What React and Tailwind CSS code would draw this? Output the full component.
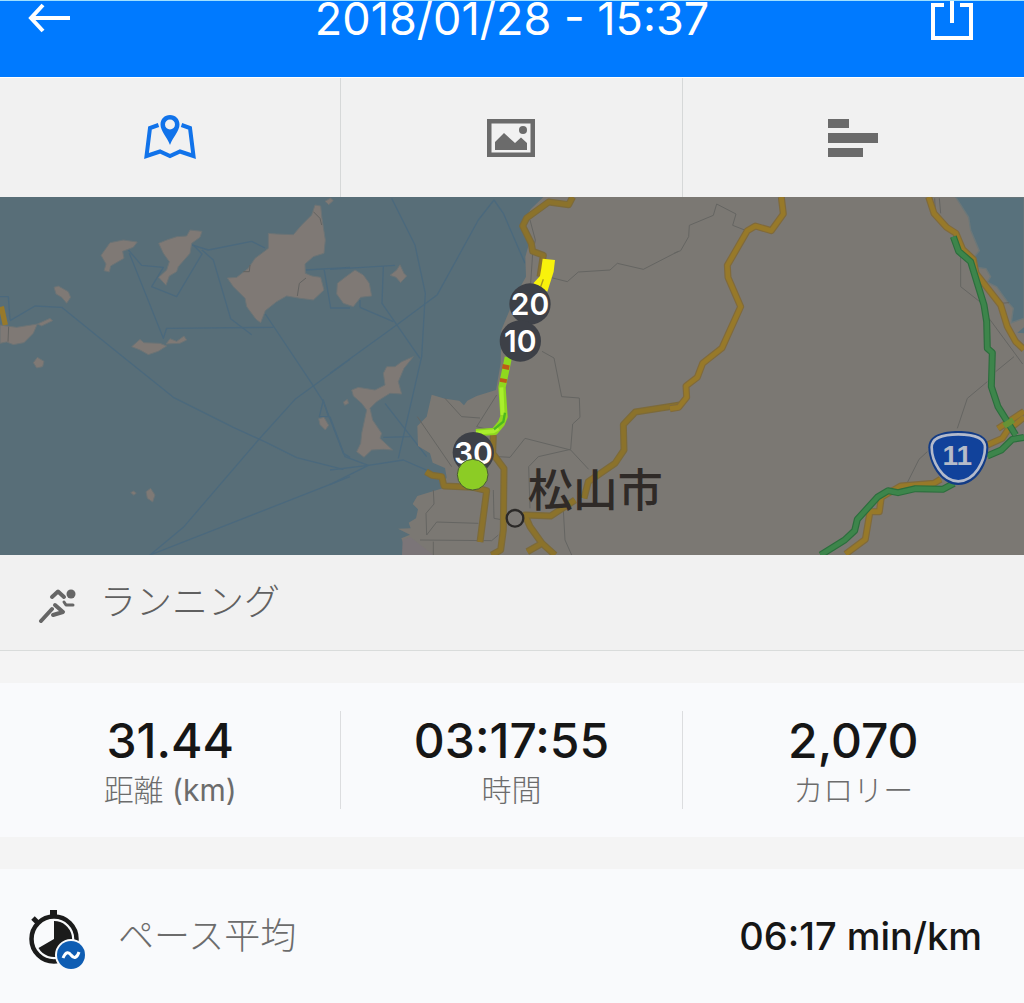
import React, { useState } from 'react'

const TABS = [
  { id: 'map', label: '地図', Icon: MapTabIcon },
  { id: 'photos', label: '写真', Icon: PhotoTabIcon },
  { id: 'splits', label: 'ラップ', Icon: SplitsTabIcon },
]

const STATS = [
  { label: '距離', unit: ' (km)', value: '31.44' },
  { label: '時間', value: '03:17:55' },
  { label: 'カロリー', value: '2,070' },
]

// Land, ferry lines and roads, split into three sheets that sit side by side
const WEST_ISLANDS = [
  'M303 196 L318 175 L330 158 L370 150 L412 156 L400 172 L368 184 L372 205 L332 228 L328 246 L312 242 L318 222 Z',
  'M476 160 L500 150 L530 140 L560 138 L570 120 L606 124 L600 142 L575 160 L570 190 L535 230 L530 245 L508 258 L498 286 L476 262 L500 240 L508 215 L490 190 Z',
  'M805 130 L830 132 L880 134 L905 105 L935 75 L945 45 L962 48 L966 85 L976 150 L972 190 L940 200 L915 222 L916 250 L936 258 L962 262 L972 300 L940 330 L900 325 L860 318 L830 335 L796 362 L782 398 L768 388 L740 350 L735 325 L700 290 L682 264 L710 262 L745 235 L765 205 L805 175 Z',
  'M162 292 L175 288 L205 305 L212 322 L200 340 L185 322 L168 312 Z',
  'M0 405 L50 412 L112 402 L100 430 L72 458 L40 464 L20 456 L0 460 Z',
  'M112 402 L150 385 L158 392 L125 408 Z',
  'M395 470 L420 448 L432 458 L480 460 L500 468 L475 484 L445 494 L420 480 Z',
  'M498 462 L510 446 L530 454 L552 438 L560 450 L540 460 Z',
  'M100 518 L112 502 L132 514 L128 530 L110 534 Z',
  'M956 686 L972 682 L986 706 L976 720 L960 704 Z',
  'M438 905 L452 895 L465 915 L458 936 L442 925 Z',
  'M392 908 L400 903 L409 909 L402 916 Z',
  'M975 34 L992 24 L1000 32 L986 44 Z',
  'M1030 636 L1042 628 L1046 640 L1034 646 Z',
]

const CENTER_ISLANDS = [
  'M22 280 L45 262 L75 240 L100 255 L118 280 L125 318 L92 322 L70 350 L40 340 L20 312 Z',
  'M180 256 L200 240 L210 224 L222 250 L230 258 L212 278 L198 262 Z',
  'M250 500 L215 515 L195 530 L170 530 L160 550 L165 585 L135 600 L85 592 L65 600 L70 618 L95 640 L110 660 L95 730 L92 760 L80 785 L102 802 L125 780 L160 778 L188 780 L150 745 L155 730 L128 690 L120 655 L140 635 L180 610 L215 612 L205 575 L222 535 Z',
]

const WEST_FERRIES = [
  'M0 320 L25 320 L30 390 M30 392 L105 348 L185 352 L350 485 L520 622 L700 712 L800 758 L890 803 L1030 838',
  'M385 180 L425 226 L490 232 L455 290 L530 320 L606 192 L580 165',
  'M388 190 L490 445 L500 415 L820 412',
  'M560 160 L625 180 L755 154 L795 174',
  'M606 180 L640 210 L692 386 L755 434',
  'M796 372 L935 580 L970 635 L1030 790 L1050 802',
  'M1050 508 L885 628 L775 750 L550 1012 L450 1095 L1050 860',
  'M915 240 L1050 232 M972 236 L992 354 L1050 354 M970 630 L958 680 L985 680 Z',
]

const CENTER_FERRIES = [
  'M185 25 L255 165 L286 310 L275 500 L205 805',
  'M0 550 L200 405 L322 314 L445 90 L492 30 L520 70 L585 220',
  'M0 238 L195 226 M160 230 L156 340 L270 505 M90 352 L190 395 M90 352 L90 330',
  'M0 680 L45 800 L115 826 L220 810 L300 845',
  'M0 840 L115 826 L0 884 M165 640 L290 800 M160 742 L240 740',
]

const CENTER_BORDERS = [
  'M600 90 L616 150 L608 190 L602 280',
  'M660 262 L712 275 L745 246 L840 240 L862 220 L940 238 L1045 184',
  'M636 484 L672 504 L695 620 L748 624 L750 682 L728 702 L722 778 L625 800 L596 830 L600 955',
  'M722 780 L585 745 L540 802 L505 800 M722 780 L776 838',
  'M345 625 L395 680 L450 684 M262 680 L365 830 M500 615 L440 710 L480 720',
  'M310 900 L312 942 L288 970 L290 1035 L320 996 L445 1000 M270 1050 L485 1052 L505 1035 M310 1055 L310 1095',
  'M490 900 L492 985 L520 990 M700 960 L705 1050 L725 1095',
]

const EAST_BORDERS = [
  'M0 190 L20 182 L44 140 L46 106 L118 76 L128 42 L186 72 L176 106 L212 120',
  'M860 190 L860 290 L930 345 M945 385 L1046 522 M1020 500 L965 545',
  'M940 575 L880 625 L850 715 M760 785 L735 808 L700 878',
  'M782 25 L784 65 M796 25 L800 70 M980 340 L1005 338',
]

const CENTER_ROADS = [
  'M728 21 L716 44 L656 36 L590 84 L578 108 L604 160 L608 184 L640 196 L630 260',
  'M490 735 L488 790 L522 836 L520 1020 L512 1080 L485 1095',
  'M288 845 L306 856 L335 860 L342 888 L430 892 L470 902 L450 1056',
  'M1050 645 L916 666 L880 704 L882 780 L855 820 L775 875 L762 925',
  'M735 930 L662 978 L585 975 L600 1010 L636 1060 L675 1095 M636 1060 L592 1085',
]

const EAST_ROADS = [
  'M322 21 L328 72 L292 122 L244 108 L220 122 L160 226 L162 262 L200 350 L144 474 L86 520 L70 562 L36 588 L38 622 L14 652 L-12 656',
  'M764 21 L780 70 L818 112 L846 130 L866 178 L898 208 L906 250 L980 345 L1000 410 L1025 455 L1050 478',
  'M972 716 L1050 664 M1050 682 L1000 722 L985 745 L940 765 M800 868 L780 880 L680 888 L622 922 L616 965 L588 965 L574 1048 L515 1092',
]

const HIGHWAYS = [
  'M838 140 L854 184 L890 215 L930 345 L938 395 L940 475 L955 488 L952 590 L972 650 L1025 735',
  'M1050 742 L1015 748 L982 780 L940 798 M840 880 L806 898 L724 896 L672 908 L642 902 L612 920 L550 988 L542 1022 L512 1050 L440 1095',
]

const KM_MARKERS = [
  { km: 20, x: 600, y: 342 },
  { km: 10, x: 571, y: 453 },
  { km: 30, x: 430, y: 788 },
]

function Lines({ paths, ...rest }) {
  return (
    <g fill="none" strokeLinejoin="round" {...rest}>
      {paths.map((d) => <path key={d} d={d} />)}
    </g>
  )
}

function Roads({ paths, casing, color }) {
  return (
    <>
      <Lines paths={paths} stroke={casing} strokeWidth="21" />
      <Lines paths={paths} stroke={color} strokeWidth="14" />
    </>
  )
}

function RouteMap() {
  return (
    <svg viewBox="0 0 3072 1074" className="block w-full" role="img" aria-label="ランニングコース">
      <rect width="3072" height="1074" fill="#586e78" />

      {/* Iyo-nada side */}
      <g transform="translate(0 -21)">
        <Lines paths={WEST_FERRIES} stroke="#4b697d" strokeWidth="4" />
        <g fill="#7f7975" stroke="#6b7375" strokeWidth="3" strokeLinejoin="round">
          {WEST_ISLANDS.map((d) => <path key={d} d={d} />)}
        </g>
        <path d="M940 65 L960 85 L965 105 M750 225 L748 245 L730 245 M918 264 L898 280 L892 318 M26 410 L24 455" fill="none" stroke="#636361" strokeWidth="3" />
        <path d="M4 350 L16 405" fill="none" stroke="#97792a" strokeWidth="16" />
      </g>

      {/* Matsuyama */}
      <g transform="translate(990 -21)">
        <Lines paths={CENTER_FERRIES} stroke="#4b697d" strokeWidth="4" />
        <g fill="#7f7975" stroke="#6b7375" strokeWidth="3" strokeLinejoin="round">
          {CENTER_ISLANDS.map((d) => <path key={d} d={d} />)}
        </g>
        <path d="M640 21 L602 58 L575 108 L596 165 L586 200 L588 260 L560 310 L535 370 L514 420 L512 520 L498 600 L440 618 L412 632 L402 646 L388 632 L345 626 L305 614 L290 680 L262 708 L264 768 L300 790 L308 818 L345 834 L350 862 L338 895 L262 918 L248 942 L264 958 L258 985 L236 998 L242 1015 L204 1016 L240 1034 L214 1045 L224 1070 L216 1095 L2082 1095 L2082 21 Z" fill="#7b7873" />
        <path d="M216 1095 L218 1050 L240 1040 L310 1095 Z" fill="#7b7578" />
        <Lines paths={CENTER_BORDERS} stroke="#656562" strokeWidth="3" />
        <Roads paths={CENTER_ROADS} casing="#7c6a3a" color="#8b722b" />

        <g fill="none" strokeLinejoin="round">
          <path d="M638 206 L675 210 L671 245 L652 305 L610 280 L630 258 L634 235 Z" fill="#f8f20c" />
          <path d="M640 268 L632 290" stroke="#a89a1c" strokeWidth="4" />
          <path d="M535 502 L526 545 L516 592 L522 680 L514 700 L494 724 L438 728" stroke="#8fd81e" strokeWidth="22" />
          <path d="M514 592 L518 675 M505 715 L490 724 L438 728" stroke="#a9ee2d" strokeWidth="12" />
          <path d="M525 668 L520 695 L492 718" stroke="#4cb820" strokeWidth="7" />
          <path d="M529 524 L526 538 M521 566 L519 577" stroke="#bd5b16" strokeWidth="21" />
        </g>

        {KM_MARKERS.map(({ km, x, y }) => (
          <g key={km}>
            <circle cx={x} cy={y} r="62" fill="#3d4047" />
            <text x={x} y={y + 33} textAnchor="middle" fill="#fff" className="font-['Inter'] text-[90px] font-semibold">{km}</text>
          </g>
        ))}
        <circle cx="428" cy="854" r="46" fill="#8ccc25" stroke="#4a5a35" strokeWidth="3" />

        <circle cx="555" cy="985" r="25" fill="#7c7975" stroke="#2b2927" strokeWidth="7" />
        <text x="796" y="952" textAnchor="middle" fill="#2f2a27" className="font-['Noto_Sans_CJK_JP'] text-[135px] font-medium">松山市</text>
      </g>

      {/* Saijo side */}
      <g transform="translate(2022 -21)">
        <path d="M845 21 L884 82 L890 120 L916 182 L902 200 L912 232 L936 236 L950 260 L940 276 L968 290 L1000 335 L1018 355 L1012 398 L1050 385 L1050 21 Z" fill="#58717c" stroke="#6b7779" strokeWidth="4" />
        <path d="M1030 428 L1050 412 L1050 430 Z" fill="#58717c" />
        <Lines paths={EAST_BORDERS} stroke="#656562" strokeWidth="3" />
        <Roads paths={EAST_ROADS} casing="#806a3b" color="#977929" />
        <Roads paths={HIGHWAYS} casing="#2c6e3d" color="#3d854b" />
        <path d="M990 708 L1018 690" stroke="#679235" strokeWidth="18" />

        <path d="M853 723 C900 723 943 735 943 772 C943 815 912 885 853 885 C796 885 763 815 763 772 C763 735 806 723 853 723 Z" fill="#123b85" />
        <path d="M853 733 C895 733 933 742 933 772 C933 812 903 874 853 874 C804 874 773 812 773 772 C773 742 811 733 853 733 Z" fill="#11429b" stroke="#b3bacb" strokeWidth="8" />
        <text x="850" y="824" textAnchor="middle" fill="#b5bbc9" className="font-['Liberation_Sans'] text-[84px] font-bold">11</text>
      </g>
    </svg>
  )
}

function MapTabIcon() {
  return (
    <svg viewBox="0 0 52 46" className="h-[46px] w-[52px]" fill="none" stroke="currentColor" strokeWidth="4">
      <path d="M14.500 10 L6 13 L2.500 41 L16 36.500 L26 41 L36 36.500 L49.500 41 L46 13 L37.500 10" />
      <path d="M26 0 C20.500 0 16.500 4 16.500 9.500 C16.500 16 23 22 26 30 C29 22 35.500 16 35.500 9.500 C35.500 4 31.500 0 26 0 Z M26 4.500 A5 5 0 1 1 26 14.500 A5 5 0 1 1 26 4.500 Z" fill="currentColor" fillRule="evenodd" stroke="none" />
    </svg>
  )
}

function PhotoTabIcon() {
  return (
    <svg viewBox="0 0 48 38" className="h-[38px] w-12" fill="currentColor">
      <path d="M0 0 H48 V38 H0 Z M4.500 4.500 V33.500 H43.500 V4.500 Z" fillRule="evenodd" />
      <path d="M8 31 V23 L17 14 L28 24 L34 18.500 L40 24 V31 Z" />
      <circle cx="36" cy="11" r="4" />
    </svg>
  )
}

function SplitsTabIcon() {
  return (
    <svg viewBox="0 0 50 38" className="h-[38px] w-[50px]" fill="currentColor">
      <path d="M0 0 H21 V9 H0 Z M0 14 H50 V24 H0 Z M0 29 H35 V38 H0 Z" />
    </svg>
  )
}

function RunnerIcon() {
  return (
    <svg viewBox="0 0 38 40" className="h-10 w-[38px] text-[#666]" fill="none" stroke="currentColor" strokeWidth="4" strokeLinecap="round" strokeLinejoin="round">
      <circle cx="33" cy="11" r="4.500" fill="currentColor" stroke="none" />
      <path d="M14 14 L20 8.500 L26 14" />
      <path d="M26 19 L28 22 L35 22" strokeWidth="3" />
      <path d="M17 22 L25 29 L15 32" />
      <path d="M14 26 L3 38" />
    </svg>
  )
}

function PaceIcon() {
  return (
    <svg viewBox="0 -8 58 68" className="h-[68px] w-[58px]">
      <circle cx="26" cy="29" r="22.500" fill="none" stroke="#1b1b1b" strokeWidth="4.500" />
      <path d="M22 0 H29 V6 H22 Z" fill="#1b1b1b" />
      <path d="M5 8 L10 13" stroke="#1b1b1b" strokeWidth="5" />
      <path d="M26 29 V11 A18 18 0 1 1 10.500 38 Z" fill="#1b1b1b" />
      <circle cx="43" cy="45" r="16" fill="#f9fafc" />
      <circle cx="43" cy="45" r="14" fill="#0f5db3" />
      <path d="M35 48 C38 41 41 42 43 45 C46 49 49 48 51 42" fill="none" stroke="#fff" strokeWidth="3" />
    </svg>
  )
}

const App = () => {
  const [tab, setTab] = useState('map')

  return (
    <div className="flex min-h-screen flex-col bg-[#f4f4f4] font-['Inter','Noto_Sans_CJK_JP',sans-serif] text-[#161616]">
      {/* Header */}
      <header className="flex items-start justify-between border-t border-[#9fe0ff] bg-[#007aff] pb-9 text-white">
        <button className="h-10 w-24 pl-7" aria-label="戻る">
          <svg viewBox="0 0 44 40" className="h-10 w-11" fill="none" stroke="currentColor" strokeWidth="4">
            <path d="M15 4 L3 17 L15 30 M3 17 H42" />
          </svg>
        </button>
        <h1 className="text-[45px] leading-9">2018/01/28 - 15:37</h1>
        <button className="h-10 w-24" aria-label="共有">
          <svg viewBox="0 0 48 40" className="h-10 w-12" fill="none" stroke="currentColor" strokeWidth="4">
            <path d="M16 4 H5 V37 H43 V4 H32 M24 0 V22" />
          </svg>
        </button>
      </header>

      {/* Tabs */}
      <nav className="grid grid-cols-3 divide-x divide-[#d6d8d8] border-t border-white bg-[#f1f1f1]">
        {TABS.map(({ id, label, Icon }) => (
          <button
            key={id}
            aria-label={label}
            aria-pressed={tab === id}
            className={`flex h-[119px] items-center justify-center ${tab === id ? 'text-[#1173ea]' : 'text-[#6b6b6b]'}`}
            onClick={() => setTab(id)}
          >
            <Icon />
          </button>
        ))}
      </nav>

      <RouteMap />

      {/* Activity type */}
      <div className="flex items-center gap-6 border-b border-[#d9dcdb] bg-[#f1f1f1] px-[38px] py-5 text-[#606060]">
        <RunnerIcon />
        <span className="text-[36px] leading-[55px] font-light">ランニング</span>
      </div>

      {/* Totals */}
      <dl className="mt-8 grid grid-cols-3 divide-x divide-[#dcdddf] bg-[#f9fafc] py-7">
        {STATS.map((stat) => (
          <div key={stat.label} className="flex flex-col-reverse text-center">
            <dt className="text-[30px] leading-[38px] font-light text-[#6c6c6c]">
              {stat.label}
              {stat.unit && <span className="font-normal">{stat.unit}</span>}
            </dt>
            <dd className="text-[48px] leading-[60px] font-medium">{stat.value}</dd>
          </div>
        ))}
      </dl>

      {/* Average pace */}
      <dl className="mt-8 flex flex-1 items-center justify-between bg-[#f9fafc] pr-[42px] pl-7">
        <dt className="flex items-center gap-8 text-[36px] leading-[60px] font-light text-[#6c6c6c]">
          <PaceIcon />
          ペース平均
        </dt>
        <dd className="text-[38px] leading-[60px] font-medium">06:17 min/km</dd>
      </dl>
    </div>
  )
}

export default App
